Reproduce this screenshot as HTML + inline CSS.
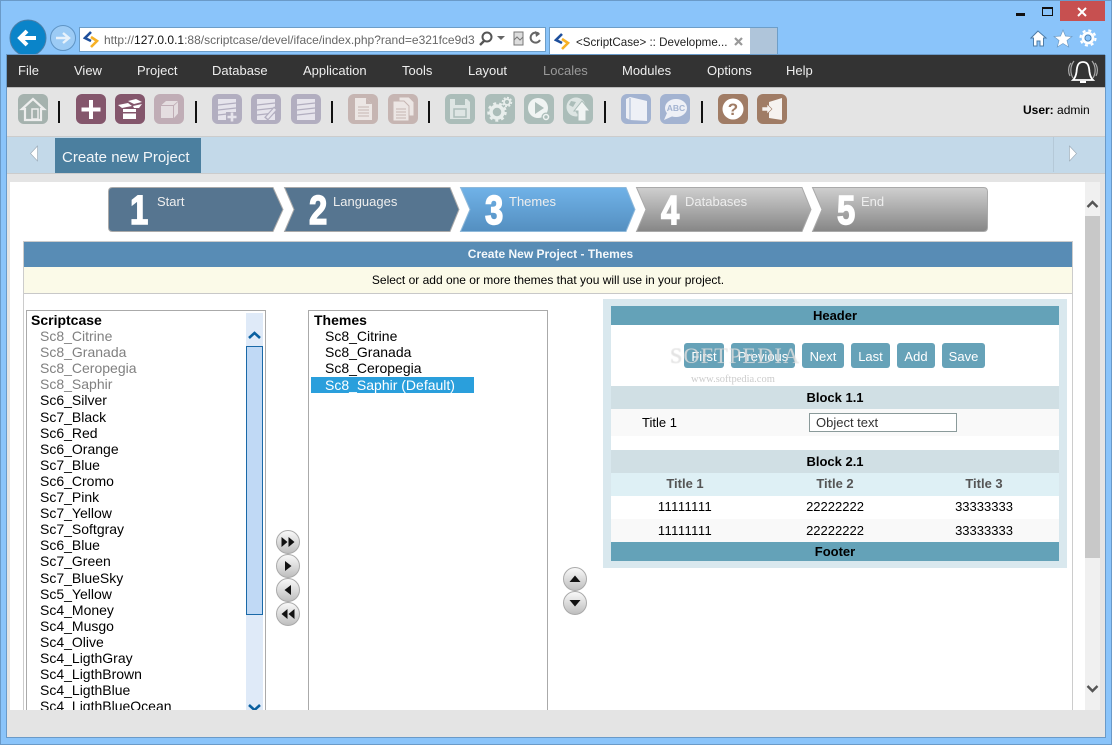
<!DOCTYPE html>
<html><head><meta charset="utf-8"><title>ScriptCase</title>
<style>
html,body{margin:0;padding:0;width:1112px;height:745px;overflow:hidden;background:#8ac4fa;font-family:"Liberation Sans",Arial,sans-serif;color:#000}
#w{position:relative;width:1112px;height:745px;overflow:hidden;box-shadow:inset 0 0 0 1px #6a9ac8}
.a,.t,svg.i{position:absolute}
.t{white-space:nowrap;line-height:16px}
.m{color:#eee;font-size:13px;top:63px}
.l{font-size:14px;left:0;white-space:nowrap;line-height:16px;position:absolute}
.g{color:#808080}
.st{color:#eee;font-size:13px;top:194px}
.n{color:#fff;font-weight:bold;font-size:41px;line-height:41px;top:190px;transform:scaleX(.8);transform-origin:0 0;-webkit-text-stroke:1.5px #fff}
.b{position:absolute;top:343px;height:25px;line-height:27px;background:#66a2b8;border-radius:3px;color:#fff;font-size:13px;text-align:center}
.r{position:absolute;left:611px;width:448px;text-align:center;font-size:13px}
.c{position:absolute;width:120px;text-align:center;font-size:13px;line-height:16px}
</style></head><body><div id="w">

<!-- browser chrome -->
<div class="a" style="left:1060px;top:1px;width:45px;height:20px;background:#c75050"></div>
<svg class="i" style="left:1076px;top:6px" width="12" height="12"><path d="M2 2L10 10M10 2L2 10" stroke="#fff" stroke-width="2"/></svg>
<div class="a" style="left:1016px;top:13px;width:9px;height:3px;background:#111"></div>
<div class="a" style="left:1042px;top:7px;width:9px;height:6px;border:1px solid #111;border-top-width:2px"></div>

<svg class="i" style="left:6px;top:18px" width="76" height="40">
<circle cx="22" cy="20" r="18" fill="#0a84c9" stroke="#4a7ea8"/>
<path d="M30 20H15M21 13L14 20L21 27" fill="none" stroke="#fff" stroke-width="4"/>
<circle cx="57" cy="20" r="12.5" fill="#9ccbf5" stroke="#5f94c4"/>
<path d="M50 20H62M57 15L63 20L57 25" fill="none" stroke="#e8f2fb" stroke-width="2.4"/>
</svg>

<div class="a" style="left:79px;top:27px;width:465px;height:23px;background:#fff;border:1px solid #6d9ec8"></div>
<svg class="i" style="left:83px;top:30px" width="18" height="18"><path d="M8 2L2 8L8 11" fill="none" stroke="#1e4f9c" stroke-width="2.6"/><path d="M8 7L14 11L8 17" fill="none" stroke="#f7b125" stroke-width="2.6"/></svg>
<div class="t" style="left:104px;top:32px;width:371px;overflow:hidden;font-size:12px;color:#666">http://<span style="color:#111">127.0.0.1</span>:88/scriptcase/devel/iface/index.php?rand=e321fce9d37</div>
<svg class="i" style="left:478px;top:30px" width="66" height="18">
<circle cx="9" cy="7" r="4.5" fill="none" stroke="#555" stroke-width="2"/><path d="M6 11L2 15" stroke="#555" stroke-width="2.4"/>
<path d="M19 6H27L23 10Z" fill="#666"/>
<rect x="36" y="2" width="9" height="13" fill="#ddd" stroke="#777"/><path d="M36 10L39 7L42 10L45 7" stroke="#777" fill="none"/>
<path d="M61 4A5 5 0 1 0 62 10" fill="none" stroke="#666" stroke-width="2"/><path d="M57 1L62 4L58 7Z" fill="#666"/>
</svg>

<div class="a" style="left:549px;top:27px;width:200px;height:28px;background:#fff;border-left:1px solid #6d9ec8;border-top:1px solid #6d9ec8"></div>
<div class="a" style="left:750px;top:27px;width:27px;height:27px;background:#afc5da;border:1px solid #6d9ec8;border-left:0"></div>
<svg class="i" style="left:554px;top:32px" width="18" height="18"><path d="M8 2L2 8L8 11" fill="none" stroke="#1e4f9c" stroke-width="2.6"/><path d="M8 7L14 11L8 17" fill="none" stroke="#f7b125" stroke-width="2.6"/></svg>
<div class="t" style="left:576px;top:35px;font-size:11.6px;color:#222">&lt;ScriptCase&gt; :: Developme...</div>
<svg class="i" style="left:733px;top:36px" width="11" height="11"><path d="M2 2L9 9M9 2L2 9" stroke="#999" stroke-width="2.2"/></svg>

<svg class="i" style="left:1030px;top:29px" width="70" height="20">
<path d="M8 2L1 9H3.5V17H7V12H10V17H13.5V9H16Z" fill="#fff" stroke="#4d7ca8"/>
<path d="M33 1L35.5 7L42 7.5L37 11.5L38.7 18L33 14.5L27.3 18L29 11.5L24 7.5L30.500 7Z" fill="#fff" stroke="#6d9ac4" stroke-width=".7"/>
<circle cx="58" cy="9" r="5" fill="none" stroke="#fff" stroke-width="2.600"/>
<circle cx="58" cy="9" r="7.500" fill="none" stroke="#fff" stroke-width="2.200" stroke-dasharray="3 2.900"/>
<circle cx="58" cy="9" r="3" fill="none" stroke="#4d7ca8" stroke-width=".8"/>
</svg>

<!-- app frame -->
<div class="a" style="left:6px;top:54px;width:1099px;height:684px;background:#e4e4e4;border:1px solid #6a9ac8;border-right:0;box-sizing:border-box"></div>
<div class="a" style="left:7px;top:55px;width:1098px;height:32px;background:#333"></div>
<div class="a" style="left:7px;top:87px;width:1098px;height:1px;background:#bbb"></div>

<div class="t m" style="left:18px">File</div>
<div class="t m" style="left:74px">View</div>
<div class="t m" style="left:137px">Project</div>
<div class="t m" style="left:212px">Database</div>
<div class="t m" style="left:303px">Application</div>
<div class="t m" style="left:402px">Tools</div>
<div class="t m" style="left:468px">Layout</div>
<div class="t m" style="left:543px;color:#999">Locales</div>
<div class="t m" style="left:622px">Modules</div>
<div class="t m" style="left:707px">Options</div>
<div class="t m" style="left:786px">Help</div>
<svg class="i" style="left:1068px;top:58px" width="30" height="28">
<path d="M15 4C10 4 9 8 8.500 14C8 18 7 20 5 22H25C23 20 22 18 21.500 14C21 8 20 4 15 4Z" fill="none" stroke="#fff" stroke-width="1.800"/>
<path d="M12 24H18" stroke="#fff" stroke-width="2"/>
<path d="M6 3C2 8 2 15 5 20M3 5C0 9 0 14 2 18M24 3C28 8 28 15 25 20M27 5C30 9 30 14 28 18" fill="none" stroke="#aaa" stroke-width="1.200"/>
</svg>

<!-- toolbar icons -->
<svg class="i" style="left:0;top:94px" width="800" height="32">
<g fill="#111"><rect x="58" y="7" width="2" height="22"/><rect x="195" y="7" width="2" height="22"/><rect x="331" y="7" width="2" height="22"/><rect x="428" y="7" width="2" height="22"/><rect x="604" y="7" width="2" height="22"/><rect x="701" y="7" width="2" height="22"/></g>
<!-- home -->
<g transform="translate(18,0)"><rect width="30" height="30" rx="6" fill="#a5b2ae"/><path d="M15 5L4 15H7V26H23V15H26Z" fill="none" stroke="#eee" stroke-width="2.200"/><rect x="14" y="15" width="6" height="10" fill="none" stroke="#eee" stroke-width="1.500"/></g>
<!-- plus -->
<g transform="translate(76,0)"><rect width="30" height="30" rx="6" fill="#84566c"/><path d="M15 6V25M5.500 15.500H24.500" stroke="#fff" stroke-width="4"/></g>
<!-- open box -->
<g transform="translate(115,0)"><rect width="30" height="30" rx="6" fill="#84566c"/><path d="M13 7L21 5L27 8L19 10ZM3 11L13 9L17 12L7 14ZM18 12L27 10L24 14H19ZM8 15H21V18H8ZM8 19.500H21V25H8Z" fill="#fff"/></g>
<!-- box disabled -->
<g transform="translate(154,0)"><rect width="30" height="30" rx="6" fill="#c0adb6"/><path d="M7 12H19V24H7ZM7.500 11L12 7H24L19.500 11ZM20 11.700L24 8V19.500L20 24Z" fill="#e4dde0"/></g>
<!-- db group -->
<g transform="translate(212,0)"><rect width="30" height="30" rx="6" fill="#b2aec0"/><rect x="6" y="5" width="18" height="21" fill="#e6e4ec"/><path d="M6 11L24 9M6 16L24 14M6 21L24 19" stroke="#b2aec0" stroke-width="1.300"/><rect x="14" y="18" width="12" height="10" fill="#b2aec0"/><path d="M20 18.500V27.500M15.500 23H24.500" stroke="#e6e4ec" stroke-width="2.600"/></g>
<g transform="translate(251,0)"><rect width="30" height="30" rx="6" fill="#b2aec0"/><rect x="6" y="5" width="18" height="21" fill="#e6e4ec"/><path d="M6 11L24 9M6 16L24 14M6 21L24 19" stroke="#b2aec0" stroke-width="1.300"/><path d="M15 25L25 14" stroke="#b2aec0" stroke-width="5"/><path d="M16 24L24 15" stroke="#e6e4ec" stroke-width="2.600"/></g>
<g transform="translate(291,0)"><rect width="30" height="30" rx="6" fill="#b2aec0"/><rect x="6" y="5" width="18" height="21" fill="#e6e4ec"/><path d="M6 11L24 9M6 16L24 14M6 21L24 19" stroke="#b2aec0" stroke-width="1.300"/></g>
<!-- docs -->
<g transform="translate(348,0)"><rect width="30" height="30" rx="6" fill="#c6b5b2"/><path d="M7 4H18L24 10V26H7Z" fill="#ece6e4"/><path d="M18 4V10H24" fill="#c6b5b2"/><path d="M10 13H21M10 16H21M10 19H21M10 22H21" stroke="#c6b5b2"/></g>
<g transform="translate(388,0)"><rect width="30" height="30" rx="6" fill="#c6b5b2"/><path d="M11 3H21L26 8V22H11Z" fill="#ece6e4" stroke="#c6b5b2"/><path d="M5 7H16L21 12V27H5Z" fill="#ece6e4" stroke="#c6b5b2"/><path d="M8 15H18M8 18H18M8 21H18M8 24H18" stroke="#c6b5b2"/></g>
<!-- save -->
<g transform="translate(445,0)"><rect width="30" height="30" rx="6" fill="#abbdb9"/><path d="M5 5H22L25 8V25H5Z" fill="#dde5e3"/><rect x="10" y="5" width="10" height="6" fill="#abbdb9"/><rect x="9" y="15" width="12" height="8" fill="none" stroke="#abbdb9" stroke-width="1.500"/></g>
<!-- gears -->
<g transform="translate(485,0)"><rect width="30" height="30" rx="6" fill="#abbdb9"/><circle cx="12" cy="18" r="6" fill="none" stroke="#e8eeec" stroke-width="3.500"/><circle cx="12" cy="18" r="8.500" fill="none" stroke="#e8eeec" stroke-width="2.500" stroke-dasharray="3 3"/><circle cx="22" cy="8" r="3" fill="none" stroke="#e8eeec" stroke-width="1.800"/><circle cx="22" cy="8" r="4.500" fill="none" stroke="#e8eeec" stroke-width="1.500" stroke-dasharray="2 1.500"/></g>
<!-- play -->
<g transform="translate(524,0)"><rect width="30" height="30" rx="6" fill="#abbdb9"/><circle cx="14" cy="14" r="10" fill="#f0f4f3"/><path d="M11 8L20 14L11 20Z" fill="#abbdb9"/><circle cx="22" cy="23" r="4.500" fill="#abbdb9"/><circle cx="22" cy="23" r="2.500" fill="none" stroke="#f0f4f3" stroke-width="1.500"/></g>
<!-- globe up -->
<g transform="translate(563,0)"><rect width="30" height="30" rx="6" fill="#abbdb9"/><circle cx="13" cy="13" r="9.500" fill="#dde5e3"/><path d="M8 7L13 8L10 13L6 11ZM12 16L16 17L14 20Z" fill="#abbdb9"/><path d="M19 7L27 17H23V27H15V17H11Z" fill="#f0f4f3" stroke="#abbdb9"/></g>
<!-- book -->
<g transform="translate(621,0)"><rect width="30" height="30" rx="6" fill="#a3b3d1"/><path d="M5 5L9 3L26 7V27L9 26L5 24Z" fill="#eef0f6"/><path d="M9 4V26" stroke="#a3b3d1"/></g>
<!-- ABC -->
<g transform="translate(660,0)"><rect width="30" height="30" rx="6" fill="#a3b3d1"/><ellipse cx="16" cy="14" rx="11" ry="9" fill="#eef0f6"/><path d="M7 19L4 26L13 22Z" fill="#eef0f6"/><text x="16" y="17" text-anchor="middle" font-family="Liberation Sans" font-size="8.500" font-weight="bold" fill="#a3b3d1">ABC</text></g>
<!-- help -->
<g transform="translate(718,0)"><rect width="30" height="30" rx="6" fill="#a07c65"/><circle cx="15" cy="15" r="10.500" fill="#fff"/><text x="15" y="21" text-anchor="middle" font-family="Liberation Sans" font-size="17" font-weight="bold" fill="#a07c65">?</text></g>
<!-- exit -->
<g transform="translate(757,0)"><rect width="30" height="30" rx="6" fill="#a07c65"/><path d="M12 8L25 4V26L12 24Z" fill="#f6f2ef"/><path d="M5 13H10V10L15 15L10 20V17H5Z" fill="#f6f2ef" stroke="#a07c65" stroke-width=".6"/></g>
</svg>
<div class="t" style="left:1023px;top:102px;font-size:12px"><b>User:</b> admin</div>

<!-- tab bar -->
<div class="a" style="left:7px;top:136px;width:1098px;height:1px;background:#ccc"></div>
<div class="a" style="left:7px;top:137px;width:1098px;height:36px;background:#c3d9e9"></div>
<div class="a" style="left:7px;top:173px;width:1098px;height:1px;background:#ccc"></div>
<div class="a" style="left:55px;top:138px;width:146px;height:35px;background:#4b7f9f"></div>
<div class="t" style="left:62px;top:149px;color:#f2f6f9;font-size:15px;line-height:18px">Create new Project</div>
<svg class="i" style="left:29px;top:145px" width="10" height="17"><path d="M8.500 1L1.500 8.500L8.500 16Z" fill="#fff" stroke="#9aa8b4" stroke-width=".6"/></svg>
<svg class="i" style="left:1068px;top:145px" width="10" height="17"><path d="M1.500 1L8.500 8.500L1.500 16Z" fill="#fff" stroke="#9aa8b4" stroke-width=".6"/></svg>
<div class="a" style="left:1053px;top:137px;width:1px;height:35px;background:#b5c9d8"></div>

<!-- main -->
<div class="a" style="left:10px;top:182px;width:1075px;height:528px;background:#fff"></div>
<div class="a" style="left:1085px;top:182px;width:15px;height:528px;background:#f0f0f0"></div>
<div class="a" style="left:1085px;top:216px;width:15px;height:342px;background:#c8c8c8"></div>
<svg class="i" style="left:1085px;top:197px" width="15" height="14"><path d="M2.500 10L7.500 5L12.500 10" fill="none" stroke="#555" stroke-width="2.400"/></svg>
<svg class="i" style="left:1085px;top:682px" width="15" height="14"><path d="M2.500 4L7.500 9L12.500 4" fill="none" stroke="#555" stroke-width="2.400"/></svg>

<!-- steps -->
<svg class="i" style="left:100px;top:180px" width="900" height="56">
<defs>
<linearGradient id="gb" x1="0" y1="0" x2="0" y2="1"><stop offset="0" stop-color="#70b2e8"/><stop offset="1" stop-color="#548fc0"/></linearGradient>
<linearGradient id="gg" x1="0" y1="0" x2="0" y2="1"><stop offset="0" stop-color="#cfcfcf"/><stop offset="1" stop-color="#868686"/></linearGradient>
</defs>
<path d="M12.500 7.500H173L183 29.500L173 51.500H12.500Q8.500 51.500 8.500 47.500V11.500Q8.500 7.500 12.500 7.500Z" fill="#567590" stroke="#aaa"/>
<path d="M184.500 7.500H350L359 29.500L350 51.500H184.500L194 29.500Z" fill="#567590" stroke="#aaa"/>
<path d="M360.500 7.500H526L535 29.500L526 51.500H360.500L370 29.500Z" fill="url(#gb)" stroke="#8fb9da"/>
<path d="M536.500 7.500H702L711 29.500L702 51.500H536.500L546 29.500Z" fill="url(#gg)" stroke="#aaa"/>
<path d="M712.500 7.500H883.500Q887.500 7.500 887.500 11.500V47.500Q887.500 51.500 883.500 51.500H712.500L722 29.500Z" fill="url(#gg)" stroke="#aaa"/>
</svg>
<div class="t n" style="left:130px">1</div><div class="t st" style="left:157px">Start</div>
<div class="t n" style="left:309px">2</div><div class="t st" style="left:333px">Languages</div>
<div class="t n" style="left:485px">3</div><div class="t st" style="left:509px">Themes</div>
<div class="t n" style="left:661px">4</div><div class="t st" style="left:685px">Databases</div>
<div class="t n" style="left:837px">5</div><div class="t st" style="left:861px">End</div>

<!-- form -->
<div class="a" style="left:23px;top:241px;width:1050px;height:469px;box-sizing:border-box;border:1px solid #ccc;border-bottom:0"></div>
<div class="a" style="left:24px;top:242px;width:1048px;height:25px;background:#588cb5;color:#f4f8fb;font-weight:bold;font-size:12px;line-height:24px;text-align:center;text-indent:5px">Create New Project - Themes</div>
<div class="a" style="left:24px;top:267px;width:1048px;height:26px;background:#fbfae8;border-bottom:1px solid #c8c8c8;font-size:12px;line-height:26px;text-align:center">Select or add one or more themes that you will use in your project.</div>

<!-- list 1 -->
<div class="a" style="left:26px;top:310px;width:240px;height:400px;box-sizing:border-box;border:1px solid #aaa;border-bottom:0;overflow:hidden;background:#fff">
<div class="a" style="left:219px;top:2px;width:17px;height:400px;background:#dfeaf8"></div>
<div class="a" style="left:219px;top:35px;width:17px;height:269px;box-sizing:border-box;background:#c0d9f5;border:1px solid #1a69a8"></div>
<svg class="a" style="left:219px;top:17px" width="17" height="14"><path d="M3 10L8.500 5L14 10" fill="none" stroke="#0a60a0" stroke-width="2.600"/></svg>
<svg class="a" style="left:219px;top:392px" width="17" height="10"><path d="M3 2L8.500 7L14 2" fill="none" stroke="#0a60a0" stroke-width="2.600"/></svg>
<div class="l" style="left:4px;top:1px"><b>Scriptcase</b></div>
<div style="position:absolute;left:13px;top:0">
<div class="l g" style="top:17px">Sc8_Citrine</div>
<div class="l g" style="top:33px">Sc8_Granada</div>
<div class="l g" style="top:49px">Sc8_Ceropegia</div>
<div class="l g" style="top:65px">Sc8_Saphir</div>
<div class="l" style="top:81px">Sc6_Silver</div>
<div class="l" style="top:98px">Sc7_Black</div>
<div class="l" style="top:114px">Sc6_Red</div>
<div class="l" style="top:130px">Sc6_Orange</div>
<div class="l" style="top:146px">Sc7_Blue</div>
<div class="l" style="top:162px">Sc6_Cromo</div>
<div class="l" style="top:178px">Sc7_Pink</div>
<div class="l" style="top:194px">Sc7_Yellow</div>
<div class="l" style="top:210px">Sc7_Softgray</div>
<div class="l" style="top:226px">Sc6_Blue</div>
<div class="l" style="top:242px">Sc7_Green</div>
<div class="l" style="top:259px">Sc7_BlueSky</div>
<div class="l" style="top:275px">Sc5_Yellow</div>
<div class="l" style="top:291px">Sc4_Money</div>
<div class="l" style="top:307px">Sc4_Musgo</div>
<div class="l" style="top:323px">Sc4_Olive</div>
<div class="l" style="top:339px">Sc4_LigthGray</div>
<div class="l" style="top:355px">Sc4_LigthBrown</div>
<div class="l" style="top:371px">Sc4_LigthBlue</div>
<div class="l" style="top:387px">Sc4_LigthBlueOcean</div>
</div>
</div>

<!-- list 2 -->
<div class="a" style="left:308px;top:310px;width:240px;height:400px;box-sizing:border-box;border:1px solid #aaa;border-bottom:0;background:#fff;overflow:hidden">
<div class="a" style="left:2px;top:66px;width:163px;height:16px;background:#2a9fdc"></div>
<div class="l" style="left:5px;top:1px"><b>Themes</b></div>
<div class="l" style="left:16px;top:17px">Sc8_Citrine</div>
<div class="l" style="left:16px;top:33px">Sc8_Granada</div>
<div class="l" style="left:16px;top:49px">Sc8_Ceropegia</div>
<div class="l" style="left:16px;top:66px;color:#fff">Sc8_Saphir (Default)</div>
</div>

<!-- arrow buttons -->
<svg class="i" style="left:270px;top:528px" width="36" height="100">
<defs><linearGradient id="gc" x1="0" y1="0" x2="0" y2="1"><stop offset="0" stop-color="#fafafa"/><stop offset="1" stop-color="#bdbdbd"/></linearGradient></defs>
<g fill="url(#gc)" stroke="#aaa"><circle cx="18" cy="14" r="11.500"/><circle cx="18" cy="38" r="11.500"/><circle cx="18" cy="62" r="11.500"/><circle cx="18" cy="86" r="11.500"/></g>
<path d="M11.500 9L17.500 14L11.500 19ZM18.500 9L24.500 14L18.500 19ZM15 33L21.500 38L15 43ZM21 57L14.500 62L21 67ZM17.500 81L11.500 86L17.500 91ZM24.500 81L18.500 86L24.500 91Z" fill="#111"/>
</svg>
<svg class="i" style="left:557px;top:565px" width="36" height="52">
<g fill="url(#gc)" stroke="#aaa"><circle cx="18" cy="14" r="11.500"/><circle cx="18" cy="38" r="11.500"/></g>
<path d="M12.500 17L18 10.500L23.500 17ZM12.500 35H23.500L18 41.500Z" fill="#111"/>
</svg>

<!-- preview -->
<div class="a" style="left:603px;top:299px;width:464px;height:269px;background:#d9e8ee"></div>
<div class="a" style="left:611px;top:306px;width:448px;height:255px;background:#fff"></div>
<div class="r" style="top:306px;height:19px;line-height:19px;background:#64a2b8;font-weight:bold">Header</div>
<div class="b" style="left:684px;width:40px">First</div>
<div class="b" style="left:731px;width:64px">Previous</div>
<div class="b" style="left:802px;width:42px">Next</div>
<div class="b" style="left:851px;width:39px">Last</div>
<div class="b" style="left:897px;width:38px">Add</div>
<div class="b" style="left:942px;width:43px">Save</div>
<div class="t" style="left:670px;top:344px;font-family:'Liberation Serif',serif;font-size:22px;line-height:24px;letter-spacing:1.3px;color:rgba(255,255,255,.5);text-shadow:0 0 1px rgba(170,170,170,.7)">SOFTPEDIA</div>
<div class="t" style="left:691px;top:372px;font-family:'Liberation Serif',serif;font-size:10.500px;color:#ccc">www.softpedia.com</div>
<div class="r" style="top:386px;height:23px;line-height:23px;background:#d0dfe4;font-weight:bold">Block 1.1</div>
<div class="a" style="left:611px;top:409px;width:448px;height:27px;background:#f9f9f9"></div>
<div class="t" style="left:642px;top:415px;font-size:13px">Title 1</div>
<div class="a" style="left:809px;top:413px;width:148px;height:19px;box-sizing:border-box;background:#fff;border:1px solid #8a9a9a;font-size:13px;line-height:17px;padding-left:6px;color:#333">Object text</div>
<div class="r" style="top:450px;height:23px;line-height:23px;background:#d0dfe4;font-weight:bold">Block 2.1</div>
<div class="a" style="left:611px;top:473px;width:448px;height:23px;background:#def0f5"></div>
<div class="a" style="left:611px;top:519px;width:448px;height:23px;background:#f9f9f9"></div>
<div class="c" style="left:625px;top:476px;font-weight:bold;color:#555">Title 1</div>
<div class="c" style="left:775px;top:476px;font-weight:bold;color:#555">Title 2</div>
<div class="c" style="left:924px;top:476px;font-weight:bold;color:#555">Title 3</div>
<div class="c" style="left:625px;top:499px;letter-spacing:.4px">11111111</div>
<div class="c" style="left:775px;top:499px">22222222</div>
<div class="c" style="left:924px;top:499px">33333333</div>
<div class="c" style="left:625px;top:523px;letter-spacing:.4px">11111111</div>
<div class="c" style="left:775px;top:523px">22222222</div>
<div class="c" style="left:924px;top:523px">33333333</div>
<div class="r" style="top:542px;height:19px;line-height:19px;background:#64a2b8;font-weight:bold">Footer</div>

<!-- bottom -->
<div class="a" style="left:7px;top:710px;width:1098px;height:28px;background:#e4e4e4"></div>
<div class="a" style="left:6px;top:737px;width:1099px;height:1px;background:#6a9ac8"></div>
<div class="a" style="left:1105px;top:55px;width:1px;height:683px;background:#6a9ac8"></div>
</div></body></html>
